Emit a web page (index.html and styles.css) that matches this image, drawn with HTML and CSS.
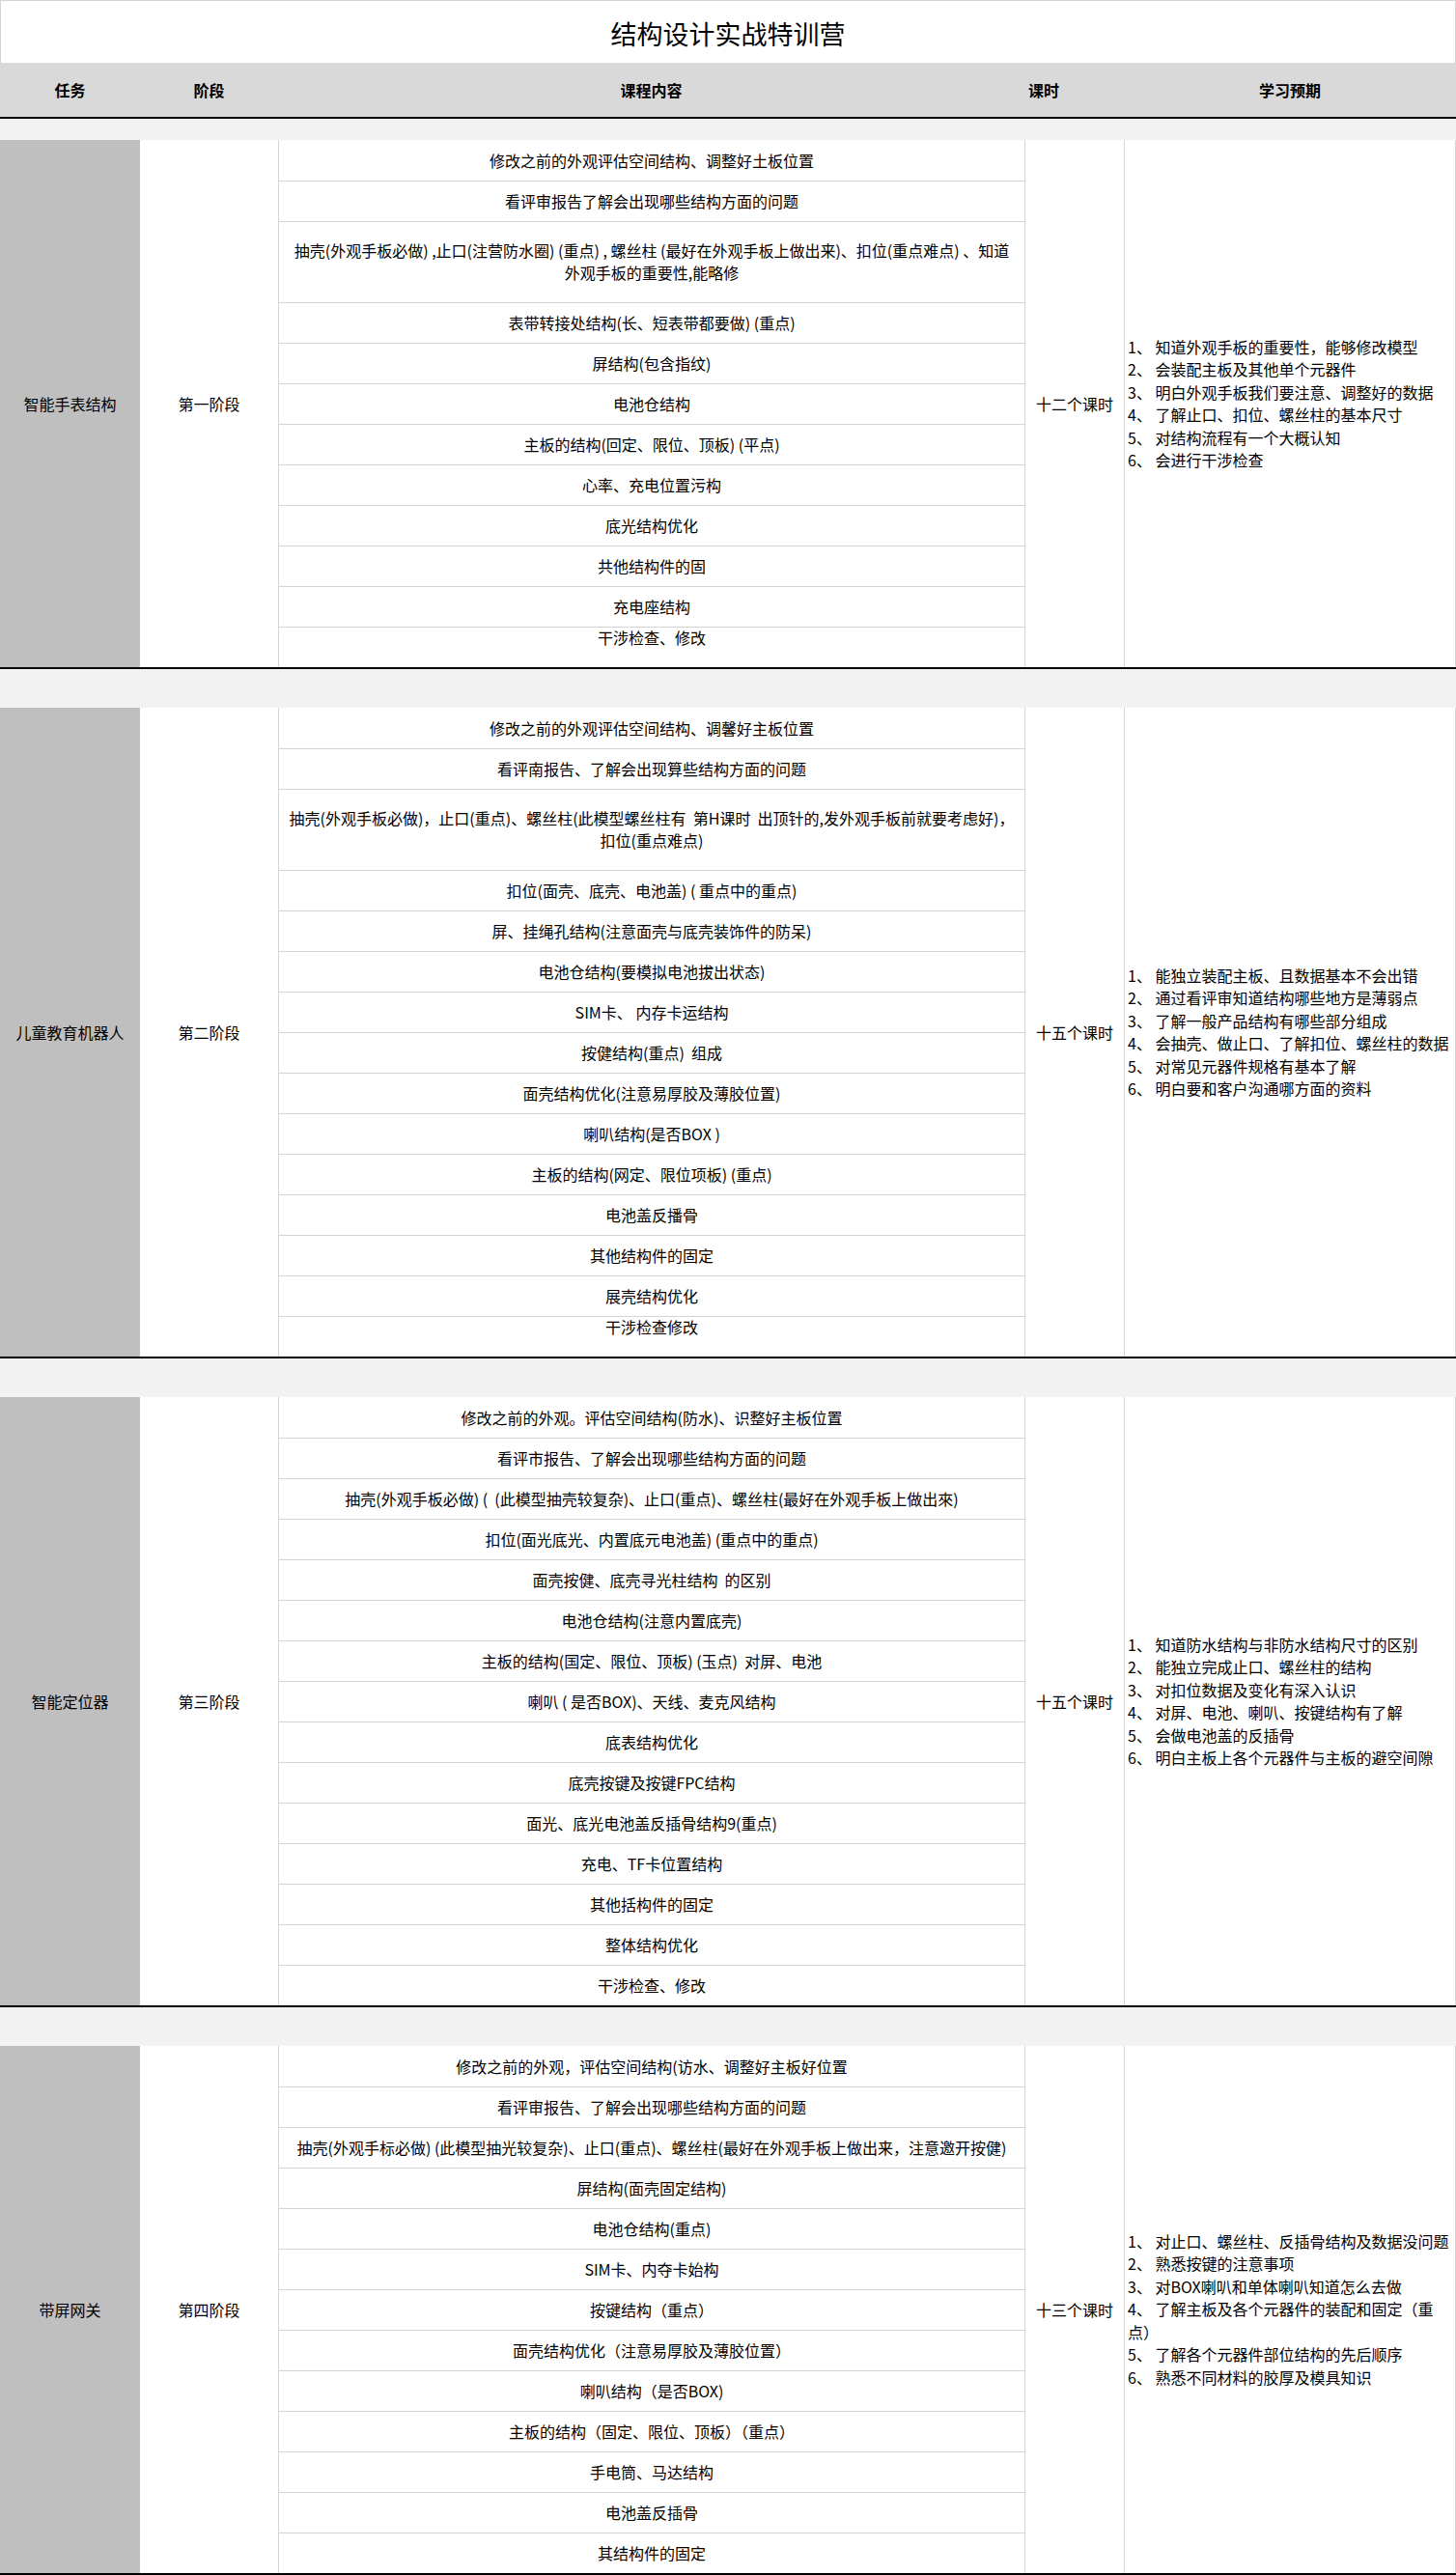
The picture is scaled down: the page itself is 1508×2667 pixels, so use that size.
FILE: index.html
```html
<!DOCTYPE html>
<html lang="zh-CN">
<head>
<meta charset="utf-8">
<title>结构设计实战特训营</title>
<link rel="stylesheet" href="styles.css">
</head>
<body>
<div class="sheet">
  <div class="title">结构设计实战特训营</div>
  <div class="head">
    <div class="hc">任务</div>
    <div class="hc">阶段</div>
    <div class="hc">课程内容</div>
    <div class="hc hc-hours">课时</div>
    <div class="hc">学习预期</div>
  </div>
  <div class="band band-first"></div>

  <div class="section">
    <div class="task">智能手表结构</div>
    <div class="stage">第一阶段</div>
    <div class="content">
      <div class="row">修改之前的外观评估空间结构、调整好土板位置</div>
      <div class="row">看评审报告了解会出现哪些结构方面的问题</div>
      <div class="row row-2"><span class="nw">抽壳(外观手板必做) ,止口(注营防水圈) (重点) , 螺丝柱 (最好在外观手板上做出来)、扣位(重点难点) 、知道</span><br>外观手板的重要性,能略修</div>
      <div class="row">表带转接处结构(长、短表带都要做) (重点)</div>
      <div class="row">屏结构(包含指纹)</div>
      <div class="row">电池仓结构</div>
      <div class="row">主板的结构(回定、限位、顶板) (平点)</div>
      <div class="row">心率、充电位置污构</div>
      <div class="row">底光结构优化</div>
      <div class="row">共他结构件的固</div>
      <div class="row">充电座结构</div>
      <div class="row row-top">干涉检查、修改</div>
    </div>
    <div class="hours">十二个课时</div>
    <div class="goals">1、 知道外观手板的重要性，能够修改模型<br>2、 会装配主板及其他单个元器件<br>3、 明白外观手板我们要注意、调整好的数据<br>4、 了解止口、扣位、螺丝柱的基本尺寸<br>5、 对结构流程有一个大概认知<br>6、 会进行干涉检查</div>
  </div>
  <div class="band"></div>

  <div class="section">
    <div class="task">儿童教育机器人</div>
    <div class="stage">第二阶段</div>
    <div class="content">
      <div class="row">修改之前的外观评估空间结构、调馨好主板位置</div>
      <div class="row">看评南报告、了解会出现算些结构方面的问题</div>
      <div class="row row-2"><span class="nw">抽壳(外观手板必做)，止口(重点)、螺丝柱(此模型螺丝柱有&nbsp;&nbsp;第H课时&nbsp;&nbsp;出顶针的,发外观手板前就要考虑好)，</span><br>扣位(重点难点)</div>
      <div class="row">扣位(面壳、底壳、电池盖) ( 重点中的重点)</div>
      <div class="row">屏、挂绳孔结构(注意面壳与底壳装饰件的防呆)</div>
      <div class="row">电池仓结构(要模拟电池拔出状态)</div>
      <div class="row">SIM卡、&nbsp;内存卡运结构</div>
      <div class="row">按健结构(重点)&nbsp;&nbsp;组成</div>
      <div class="row">面壳结构优化(注意易厚胶及薄胶位置)</div>
      <div class="row">喇叭结构(是否BOX )</div>
      <div class="row">主板的结构(网定、限位项板) (重点)</div>
      <div class="row">电池盖反播骨</div>
      <div class="row">其他结构件的固定</div>
      <div class="row">展壳结构优化</div>
      <div class="row row-top">干涉检查修改</div>
    </div>
    <div class="hours">十五个课时</div>
    <div class="goals">1、 能独立装配主板、且数据基本不会出错<br>2、 通过看评审知道结构哪些地方是薄弱点<br>3、 了解一般产品结构有哪些部分组成<br>4、 会抽壳、做止口、了解扣位、螺丝柱的数据<br>5、 对常见元器件规格有基本了解<br>6、 明白要和客户沟通哪方面的资料</div>
  </div>
  <div class="band"></div>

  <div class="section">
    <div class="task">智能定位器</div>
    <div class="stage">第三阶段</div>
    <div class="content">
      <div class="row">修改之前的外观。评估空间结构(防水)、识整好主板位置</div>
      <div class="row">看评市报告、了解会出现哪些结构方面的问题</div>
      <div class="row">抽壳(外观手板必做) (&nbsp;&nbsp;(此模型抽壳较复杂)、止口(重点)、螺丝柱(最好在外观手板上做出來)</div>
      <div class="row">扣位(面光底光、内置底元电池盖) (重点中的重点)</div>
      <div class="row">面壳按健、底壳寻光柱结构&nbsp;&nbsp;的区别</div>
      <div class="row">电池仓结构(注意内置底壳)</div>
      <div class="row">主板的结构(国定、限位、顶板) (玉点)&nbsp;&nbsp;对屏、电池</div>
      <div class="row">喇叭 ( 是否BOX)、天线、麦克风结构</div>
      <div class="row">底表结构优化</div>
      <div class="row">底壳按键及按键FPC结构</div>
      <div class="row">面光、底光电池盖反插骨结构9(重点)</div>
      <div class="row">充电、TF卡位置结构</div>
      <div class="row">其他括构件的固定</div>
      <div class="row">整体结构优化</div>
      <div class="row">干涉检查、修改</div>
    </div>
    <div class="hours">十五个课时</div>
    <div class="goals">1、 知道防水结构与非防水结构尺寸的区别<br>2、 能独立完成止口、螺丝柱的结构<br>3、 对扣位数据及变化有深入认识<br>4、 对屏、电池、喇叭、按键结构有了解<br>5、 会做电池盖的反插骨<br>6、 明白主板上各个元器件与主板的避空间隙</div>
  </div>
  <div class="band"></div>

  <div class="section">
    <div class="task">带屏网关</div>
    <div class="stage">第四阶段</div>
    <div class="content">
      <div class="row">修改之前的外观，评估空间结构(访水、调整好主板好位置</div>
      <div class="row">看评审报告、了解会出现哪些结构方面的问题</div>
      <div class="row">抽壳(外观手标必做) (此模型抽光较复杂)、止口(重点)、螺丝柱(最好在外观手板上做出来，注意邀开按健)</div>
      <div class="row">屏结构(面壳固定结构)</div>
      <div class="row">电池仓结构(重点)</div>
      <div class="row">SIM卡、内夺卡始构</div>
      <div class="row">按键结构（重点）</div>
      <div class="row">面壳结构优化（注意易厚胶及薄胶位置）</div>
      <div class="row">喇叭结构（是否BOX)</div>
      <div class="row">主板的结构（固定、限位、顶板）（重点）</div>
      <div class="row">手电筒、马达结构</div>
      <div class="row">电池盖反插骨</div>
      <div class="row">其结构件的固定</div>
    </div>
    <div class="hours">十三个课时</div>
    <div class="goals">1、 对止口、螺丝柱、反插骨结构及数据没问题<br>2、 熟悉按键的注意事项<br>3、 对BOX喇叭和单体喇叭知道怎么去做<br>4、 了解主板及各个元器件的装配和固定（重点）<br>5、 了解各个元器件部位结构的先后顺序<br>6、 熟悉不同材料的胶厚及模具知识</div>
  </div>
</div>
</body>
</html>
```

FILE: styles.css
```css
html, body {
  margin: 0;
  padding: 0;
  background: #ffffff;
}

body {
  font-family: "Noto Sans CJK SC", "Noto Sans", sans-serif;
  font-size: 16px;
  color: #000000;
}

.sheet {
  width: 1508px;
}

.title {
  height: 65px;
  box-sizing: border-box;
  border: 1px solid #d4d4d4;
  border-bottom: none;
  display: flex;
  align-items: center;
  justify-content: center;
  font-size: 27px;
  line-height: 1;
  padding-top: 2px;
}

.head {
  display: grid;
  grid-template-columns: 145px 143px 773px 103px 344px;
  height: 58px;
  box-sizing: border-box;
  background: #d9d9d9;
  border-bottom: 2px solid #000000;
}

.hc {
  display: flex;
  align-items: center;
  justify-content: center;
  font-weight: bold;
  font-size: 16px;
}

.hc-hours {
  justify-content: flex-start;
  padding-left: 4px;
}

.band {
  height: 40px;
  background: #f2f2f2;
}

.band-first {
  height: 22px;
}

.section {
  display: grid;
  grid-template-columns: 145px 143px 773px 103px 344px;
  border-bottom: 2px solid #000000;
}

.task {
  background: #bfbfbf;
  display: flex;
  align-items: center;
  justify-content: center;
}

.stage {
  display: flex;
  align-items: center;
  justify-content: center;
}

.content {
  display: flex;
  flex-direction: column;
  border-left: 1px solid #d4d4d4;
}

.row {
  height: 42px;
  box-sizing: border-box;
  display: flex;
  align-items: center;
  justify-content: center;
  flex-direction: column;
  text-align: center;
  padding: 0 8px;
  line-height: 23px;
  border-top: 1px solid #d4d4d4;
}

.row:first-child {
  border-top: none;
}

.row-2 {
  height: 84px;
  display: block;
  padding-top: 18px;
}

.row-top {
  justify-content: flex-start;
  line-height: 20px;
}

.nw {
  white-space: nowrap;
}

.hours {
  display: flex;
  align-items: center;
  justify-content: center;
  border-left: 1px solid #d4d4d4;
}

.goals {
  display: flex;
  flex-direction: column;
  justify-content: center;
  border-left: 1px solid #d4d4d4;
  border-right: 1px solid #d4d4d4;
  padding: 0 2px 0 3px;
  line-height: 23.5px;
  text-align: left;
}
```
